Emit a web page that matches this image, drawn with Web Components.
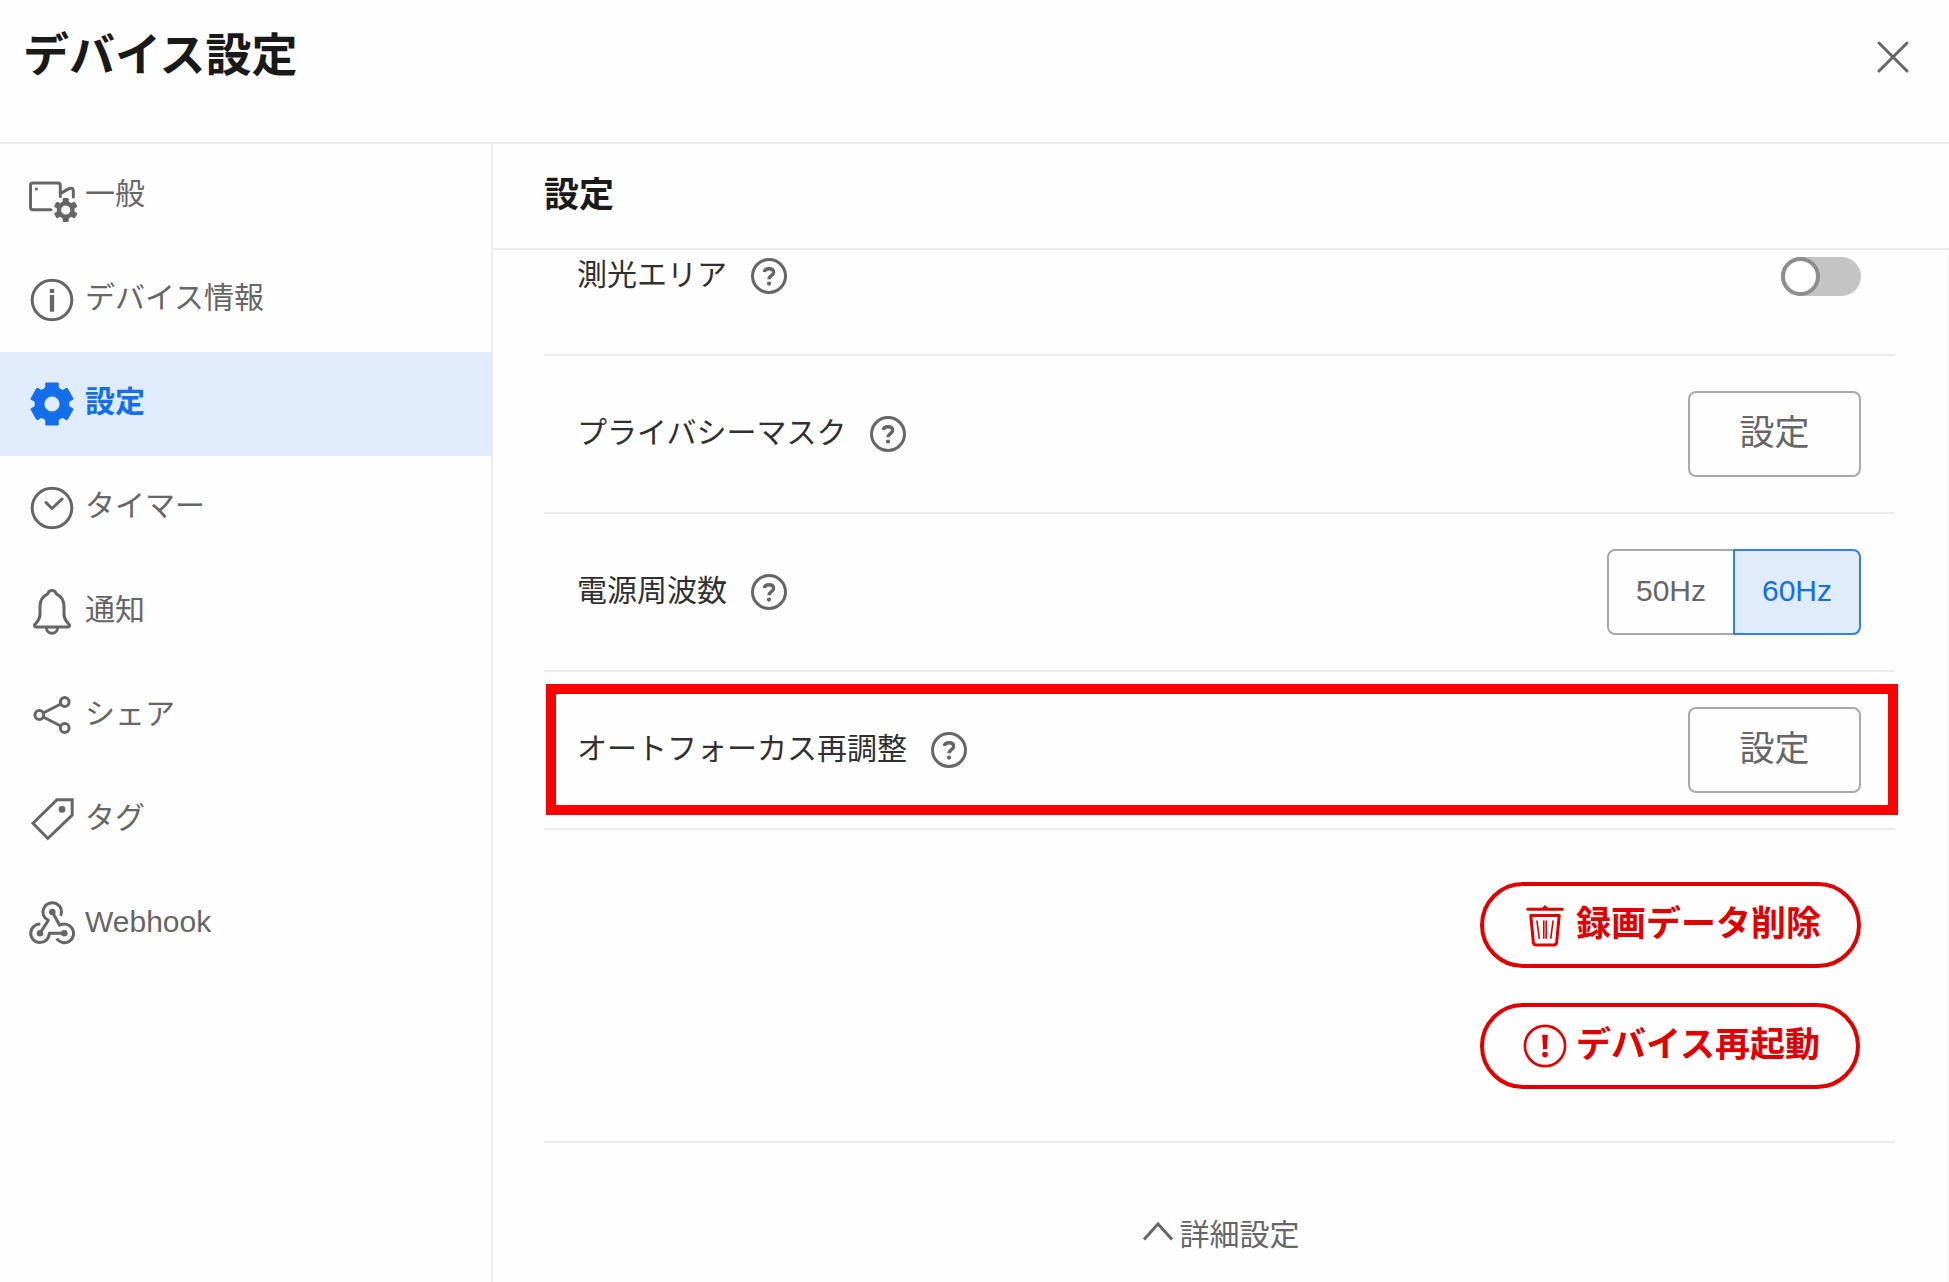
<!DOCTYPE html>
<html lang="ja">
<head>
<meta charset="utf-8">
<meta name="viewport" content="width=device-width, initial-scale=1">
<title>デバイス設定</title>
<style>
  :root {
    --ink: #1a1a1a;
    --text: #303030;
    --muted: #666;
    --line: #ededed;
    --outline: #a9a9a9;
    --blue: #146eeb;
    --blue-border: #2f80f2;
    --blue-bg: #e0ebfc;
    --red: #e00000;
  }
  body {
    margin: 0;
    background: #fefefe;
    color: var(--text);
    font: 30px/46px "Liberation Sans", "Noto Sans CJK JP", sans-serif;
  }
</style>
</head>
<body>
<device-settings></device-settings>

<script>
const define = (name, html, setup) => {
  const template = document.createElement('template');
  template.innerHTML = '<style>*,*::before,*::after{box-sizing:border-box}:host([hidden]){display:none}</style>' + html;
  customElements.define(name, class extends HTMLElement {
    constructor() {
      super();
      this.attachShadow({ mode: 'open' }).append(template.content.cloneNode(true));
    }
    connectedCallback() {
      if (setup && !this.ready) { this.ready = true; setup(this, this.shadowRoot); }
    }
  });
};

const gear = (cx, cy, outer, body, hole, tooth) => {
  const ring = `<circle cx="${cx}" cy="${cy}" r="${(body + hole) / 2}" fill="none" stroke="currentColor" stroke-width="${body - hole}"/>`;
  const teeth = [0, 60, 120, 180, 240, 300].map(a =>
    `<rect x="${cx - tooth / 2}" y="${cy - outer}" width="${tooth}" height="${outer - (body + hole) / 2}" rx="1.2" fill="currentColor" stroke="none" transform="rotate(${a} ${cx} ${cy})"/>`).join('');
  return ring + teeth;
};

/* Each entry: [viewBox side, stroke width, markup] */
const icons = {
  general: [48, 3, `<path d="M23 37.8H5Q2.5 37.8 2.5 35.3V13.5Q2.5 11 5 11H29.8Q32.3 11 32.3 13.5V24.4M32.3 21.6L41 16.6Q45.3 15 45.3 19V25"/><circle cx="8.3" cy="17" r="1.6" fill="currentColor" stroke="none"/>${gear(37.7, 38, 12, 9, 4.6, 6)}`],
  info: [48, 3, '<circle cx="24" cy="24" r="19.8"/><path d="M24 13v4M24 19v16.7" stroke-width="4.3" stroke-linecap="butt"/>'],
  settings: [48, 3, gear(24, 24, 21.4, 17.4, 7.6, 13.6)],
  timer: [48, 3, '<circle cx="24" cy="24" r="19.8"/><path d="M18 18.5l6 6L34 15"/>'],
  bell: [48, 3, '<path d="M24 2.6c-2.3 0-3.6 1.1-4.3 3.2C14.6 8.2 12 12.8 12 18.5V26.5C12 30.5 10.5 32.5 8 35.2L6.9 36.4C5.8 38 6.6 38.9 8 38.9H40C41.4 38.9 42.2 38 41.1 36.4L40 35.2C37.5 32.5 36 30.5 36 26.5V18.5C36 12.8 33.4 8.2 28.3 5.8C27.6 3.7 26.3 2.6 24 2.6ZM18.5 40a5.5 5.2 0 0 0 11 0"/>'],
  share: [48, 3, '<circle cx="11.3" cy="23" r="4.4"/><circle cx="36.7" cy="10" r="4.4"/><circle cx="36.7" cy="36" r="4.4"/><path d="M15.3 21L32.7 12M15.3 25L32.7 34"/>'],
  tag: [48, 3, '<path d="M29 3.8H44.2V19.2L19.8 42.5L5 27.2Z" stroke-linejoin="miter"/><circle cx="34" cy="13.4" r="3.3" fill="currentColor" stroke="none"/>'],
  webhook: [48, 3, '<path d="M32.7 15.9A9.3 9.3 0 1 0 20.3 20.4L12 33.3M24.3 12L31.7 25.3A9.3 9.3 0 1 1 28.7 38.7M36.3 33.3H21.3A9.3 9.3 0 1 1 12.3 24" stroke-linecap="butt"/><g fill="currentColor" stroke="none"><circle cx="24.3" cy="12" r="3.3"/><circle cx="12" cy="33.3" r="3.3"/><circle cx="36.3" cy="33.3" r="3.3"/></g>'],
  help: [36, 3, '<circle cx="18" cy="18" r="16.5"/><path d="M13.3 14C13.6 11.8 15.4 10.8 18 10.8C20.9 10.8 22.6 12.2 22.6 14.4C22.6 17.6 18 17.8 18 21.3" stroke-width="3.4" stroke-linecap="butt"/><circle cx="18" cy="25.6" r="2.1" fill="currentColor" stroke="none"/>'],
  trash: [42, 3, '<path d="M3.8 5.3H38.2"/><path d="M17.5 4.5L21 1L24.5 4.5Z" fill="currentColor" stroke="none"/><path d="M6.8 11.5H35.2L32.7 38Q32.3 41 30 41H12Q9.7 41 9.3 38Z"/><path d="M13 17L15.2 34.3M19.8 17V34.3M22.2 17V34.3M29 17L26.8 34.3" stroke-width="1.6"/>'],
  alert: [42, 2.6, '<circle cx="21" cy="21" r="20.1"/><path d="M18.2 9.8H23.8L22.9 24.3H19.1Z" fill="currentColor" stroke="none"/><circle cx="21" cy="29.6" r="2.8" fill="currentColor" stroke="none"/>'],
  close: [36, 3, '<path d="M4 4L32 32M32 4L4 32"/>'],
  up: [36, 3, '<path d="M4 22.5L18 7L32 22.5" stroke-linecap="butt" stroke-linejoin="miter"/>']
};

define('ui-icon', `
  <style>
    :host { display: block; flex: none; }
    svg { display: block; overflow: visible; fill: none; stroke: currentColor; stroke-linecap: round; stroke-linejoin: round; }
  </style>`,
  (el, root) => {
    const [size, stroke, body] = icons[el.getAttribute('name')];
    root.innerHTML += `<svg width="${size}" height="${size}" viewBox="0 0 ${size} ${size}" stroke-width="${stroke}" aria-hidden="true">${body}</svg>`;
  });

define('dialog-header', `
  <style>
    :host { display: flex; justify-content: space-between; align-items: center; padding: 25px 38px 54px 23px; border-bottom: 2px solid var(--line); }
    h1 { margin: 0; padding-bottom: 3px; font-size: 46px; line-height: 60px; color: var(--ink); }
    button { padding: 0; border: 0; background: none; color: var(--muted); cursor: pointer; }
  </style>
  <h1><slot></slot></h1>
  <button type="button" aria-label="閉じる"><ui-icon name="close"></ui-icon></button>`);

define('nav-item', `
  <style>
    :host { display: block; }
    a { display: flex; align-items: center; gap: 9px; height: 104px; padding: 0 28px; color: var(--muted); text-decoration: none; }
    span { padding-bottom: 4px; }
    :host([current]) a { background: var(--blue-bg); color: var(--blue); font-weight: bold; }
  </style>
  <a href="#"><span><slot></slot></span></a>`,
  (el, root) => {
    const link = root.querySelector('a');
    const icon = document.createElement('ui-icon');
    icon.setAttribute('name', el.getAttribute('icon'));
    link.prepend(icon);
    link.href = '#' + el.getAttribute('icon');
    if (el.hasAttribute('current')) link.setAttribute('aria-current', 'page');
  });

define('side-nav', `
  <style>
    :host { display: block; flex: none; width: 493px; border-right: 2px solid var(--line); }
    nav { display: flex; flex-direction: column; }
  </style>
  <nav><slot></slot></nav>`);

define('help-button', `
  <style>
    :host { display: block; }
    button { display: block; padding: 0; border: 0; background: none; color: var(--muted); cursor: pointer; }
  </style>
  <button type="button" aria-label="ヘルプ"><ui-icon name="help"></ui-icon></button>`);

define('setting-row', `
  <style>
    :host { display: flex; position: relative; align-items: center; justify-content: space-between; min-height: 158px; padding: 0 34px 0 33px; border-bottom: 2px solid var(--line); }
    .label { display: flex; align-items: center; gap: 24px; }
    .text { padding-bottom: 3px; }
    :host([highlighted])::after { content: ""; position: absolute; inset: 12px -3px 13px 2px; border: 10px solid #f00; pointer-events: none; }
  </style>
  <div class="label"><span class="text"><slot name="label"></slot></span><help-button></help-button></div>
  <slot></slot>`);

define('outline-button', `
  <style>
    :host { display: block; }
    button { display: block; min-width: 173px; height: 86px; padding: 0 0 2px; border: 2px solid var(--outline); border-radius: 8px; background: none; color: var(--muted); font: inherit; font-size: 35px; cursor: pointer; }
  </style>
  <button type="button"><slot></slot></button>`);

define('toggle-switch', `
  <style>
    :host { display: block; }
    input { display: block; appearance: none; width: 80px; height: 39px; margin: 0; border-radius: 20px; background: #c4c4c4; cursor: pointer; }
    input::before { content: ""; display: block; width: 39px; height: 39px; border: 4px solid #8e8e8e; border-radius: 50%; background: #fff; }
    input:checked { background: var(--blue); }
    input:checked::before { margin-left: auto; }
  </style>
  <input type="checkbox" role="switch">`,
  (el, root) => root.querySelector('input').setAttribute('aria-label', el.getAttribute('label')));

define('frequency-picker', `
  <style>
    :host { display: block; }
    fieldset { display: flex; margin: 0; padding: 0; border: 0; }
    label { position: relative; display: flex; align-items: center; justify-content: center; width: 128px; height: 86px; padding-bottom: 2px; border: 2px solid var(--outline); color: var(--muted); cursor: pointer; }
    label:first-of-type { border-radius: 8px 0 0 8px; }
    label:last-of-type { margin-left: -2px; border-radius: 0 8px 8px 0; }
    input { position: absolute; inset: 0; width: 100%; height: 100%; margin: 0; opacity: 0; cursor: pointer; }
    label:has(input:checked) { z-index: 1; border-color: var(--blue-border); background: var(--blue-bg); color: var(--blue); }
  </style>
  <fieldset aria-label="電源周波数">
    <label><input type="radio" name="hz" value="50">50Hz</label>
    <label><input type="radio" name="hz" value="60" checked>60Hz</label>
  </fieldset>`);

define('danger-button', `
  <style>
    :host { display: block; }
    button { display: flex; align-items: center; gap: 10px; height: 86px; padding: 0 36px 0 40px; border: 4px solid var(--red); border-radius: 43px; background: none; color: var(--red); font: inherit; font-size: 35px; font-weight: bold; cursor: pointer; }
    span { padding-bottom: 2px; }
  </style>
  <button type="button"><slot name="icon"></slot><span><slot></slot></span></button>`);

define('advanced-toggle', `
  <style>
    :host { display: flex; justify-content: center; padding: 69px 0 20px; }
    button { display: flex; align-items: center; gap: 4px; padding: 0; border: 0; background: none; color: var(--muted); font: inherit; cursor: pointer; }
  </style>
  <button type="button" aria-expanded="true"><ui-icon name="up"></ui-icon><span><slot></slot></span></button>`);

define('settings-panel', `
  <style>
    :host { display: flex; flex-direction: column; flex: 1; min-width: 0; }
    h2 { margin: 0; padding: 28px 51px 30px; border-bottom: 2px solid var(--line); color: var(--ink); font-size: 35px; line-height: 46px; }
    .view { flex: 1; overflow: hidden; padding: 0 52px 0 51px; border-right: 2px solid #f8f8f8; }
    /* The list is scrolled so that its first row is partly under the heading. */
    .list { margin-top: -52px; }
    .actions { display: flex; flex-direction: column; align-items: stretch; width: fit-content; gap: 35px; }
    .danger { display: flex; justify-content: flex-end; padding: 52px 34px; border-bottom: 2px solid var(--line); }
  </style>
  <h2>設定</h2>
  <div class="view">
    <div class="list">
      <setting-row><span slot="label">測光エリア</span><toggle-switch label="測光エリア"></toggle-switch></setting-row>
      <setting-row><span slot="label">プライバシーマスク</span><outline-button>設定</outline-button></setting-row>
      <setting-row><span slot="label">電源周波数</span><frequency-picker></frequency-picker></setting-row>
      <setting-row highlighted><span slot="label">オートフォーカス再調整</span><outline-button>設定</outline-button></setting-row>
    </div>
    <div class="danger">
      <div class="actions">
        <danger-button><ui-icon slot="icon" name="trash"></ui-icon>録画データ削除</danger-button>
        <danger-button><ui-icon slot="icon" name="alert"></ui-icon>デバイス再起動</danger-button>
      </div>
    </div>
    <advanced-toggle>詳細設定</advanced-toggle>
  </div>`);

define('device-settings', `
  <style>
    :host { display: flex; flex-direction: column; min-height: 100vh; }
    main { display: flex; flex: 1; }
  </style>
  <dialog-header>デバイス設定</dialog-header>
  <main>
    <side-nav>
      <nav-item icon="general">一般</nav-item>
      <nav-item icon="info">デバイス情報</nav-item>
      <nav-item icon="settings" current>設定</nav-item>
      <nav-item icon="timer">タイマー</nav-item>
      <nav-item icon="bell">通知</nav-item>
      <nav-item icon="share">シェア</nav-item>
      <nav-item icon="tag">タグ</nav-item>
      <nav-item icon="webhook">Webhook</nav-item>
    </side-nav>
    <settings-panel></settings-panel>
  </main>`);
</script>
</body>
</html>
